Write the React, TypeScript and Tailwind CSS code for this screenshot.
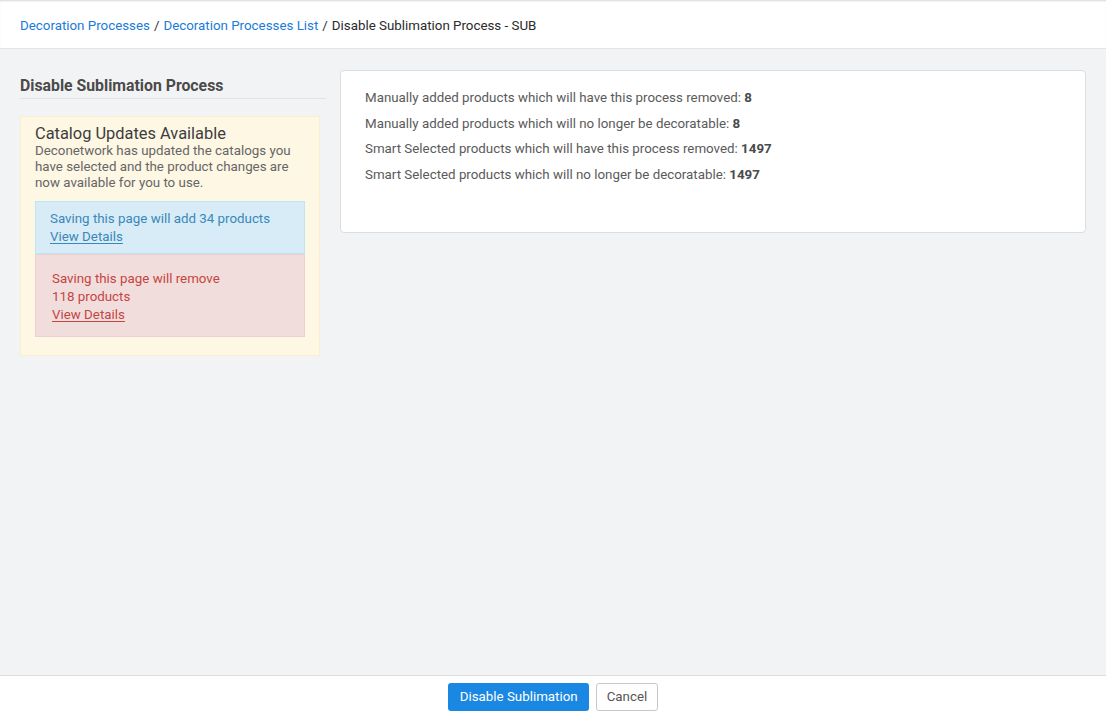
import React from "react";

export default function App() {
  return (
    <div className="w-[1106px] h-[718px] bg-[#f2f3f5] flex flex-col overflow-hidden" style={{ fontFamily: "Roboto, 'Liberation Sans', sans-serif" }}>
      <div className="h-[49px] bg-white border-b border-[#e3e4e6] shadow-[inset_0_2px_2px_-1px_#d8d8d8] flex items-center px-5 pt-[4px] text-[13.33px] shrink-0">
        <a className="text-[#1a7bd8]">Decoration Processes</a>
        <span className="mx-[4px] text-[#333]">/</span>
        <a className="text-[#1a7bd8]">Decoration Processes List</a>
        <span className="mx-[4px] text-[#333]">/</span>
        <span className="text-[#2b2b2b]">Disable Sublimation Process - SUB</span>
      </div>
      <div className="flex-1 flex px-5 pt-[21px] gap-[14px]">
        <div className="w-[306px] shrink-0">
          <div className="text-[15.8px] font-bold text-[#4a4a4a] pt-[7px] pb-[3px] border-b border-[#e2e3e6] leading-[18px]">Disable Sublimation Process</div>
          <div className="mt-[17px] w-[300px] bg-[#fdf7e4] border border-[#f9efcf] px-[14px] pt-[8px] pb-[18px]">
            <div className="text-[16.4px] text-[#3d3d3d] leading-[18px]">Catalog Updates Available</div>
            <div className="text-[13.33px] text-[#666] leading-[16px] mt-[0px]">Deconetwork has updated the catalogs you have selected and the product changes are now available for you to use.</div>
            <div className="mt-[10px] bg-[#d7ecf6] border border-[#bde6f2] px-[14px] pt-[8px] pb-[7px] text-[13.33px] leading-[18px] text-[#3a88ba]">
              <div>Saving this page will add 34 products</div>
              <a className="underline underline-offset-2">View Details</a>
            </div>
            <div className="bg-[#f2dddd] border border-[#eccfd3] px-[16px] pt-[15px] pb-[12px] text-[13.33px] leading-[18px] text-[#c4463f]">
              <div>Saving this page will remove</div>
              <div>118 products</div>
              <a className="underline underline-offset-2">View Details</a>
            </div>
          </div>
        </div>
        <div className="flex-1">
          <div className="bg-white border border-[#dcdde0] rounded-[4px] h-[163px] px-6 pt-[18px] text-[13.33px] text-[#5a5a5a] leading-[18px]">
            <div className="mb-[7.5px]">Manually added products which will have this process removed: <b className="text-[#4a4a4a]">8</b></div>
            <div className="mb-[7.5px]">Manually added products which will no longer be decoratable: <b className="text-[#4a4a4a]">8</b></div>
            <div className="mb-[7.5px]">Smart Selected products which will have this process removed: <b className="text-[#4a4a4a]">1497</b></div>
            <div>Smart Selected products which will no longer be decoratable: <b className="text-[#4a4a4a]">1497</b></div>
          </div>
        </div>
      </div>
      <div className="h-[43px] bg-white border-t border-[#dcdde0] flex items-center justify-center gap-[7px] shrink-0">
        <button className="h-[28px] px-[11.5px] rounded-[3px] bg-[#1a87e2] text-white text-[13.33px]">Disable Sublimation</button>
        <button className="h-[28px] px-[9.5px] rounded-[3px] bg-white border border-[#c8c8c8] text-[#555] text-[13.33px]">Cancel</button>
      </div>
    </div>
  );
}
